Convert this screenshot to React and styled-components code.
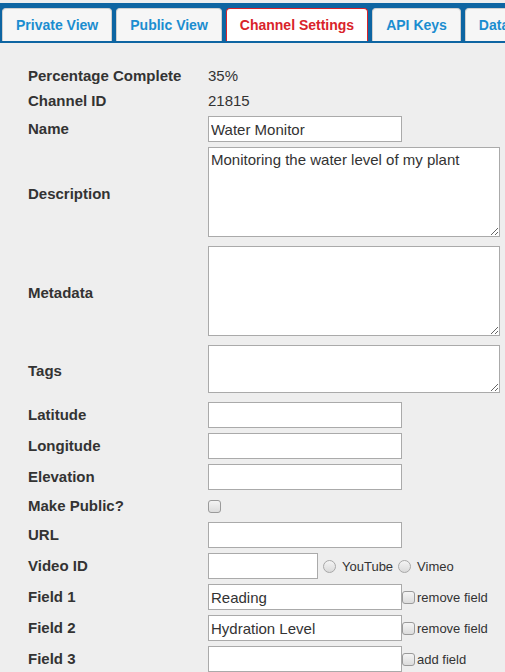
import React from "react";
import styled, { createGlobalStyle } from "styled-components";

const GlobalStyle = createGlobalStyle`
  html, body {
    margin: 0;
    padding: 0;
    background: #eeeeee;
    font-family: "Liberation Sans", Arial, sans-serif;
    color: #333;
    overflow: hidden;
  }
`;

const TabBar = styled.div`
  display: flex;
  gap: 4px;
  margin-top: 3px;
  padding: 5px 0 2px 2px;
  background: #0e65a2;
  overflow: hidden;
  white-space: nowrap;
`;

const Tab = styled.div`
  flex: none;
  height: 32px;
  line-height: 33px;
  padding: 0 13px;
  border: 1px solid ${(p) => (p.$active ? "#d9232a" : "#cfcfcf")};
  border-bottom: none;
  border-radius: 4px 4px 0 0;
  background: ${(p) => (p.$active ? "#ffffff" : "#f6f6f6")};
  color: ${(p) => (p.$active ? "#d9232a" : "#1b8dd0")};
  font-weight: bold;
  font-size: 14px;
`;

const Form = styled.div`
  display: grid;
  grid-template-columns: 180px auto;
  row-gap: 5px;
  align-items: center;
  margin: 23px 0 0 28px;
`;

const Label = styled.div`
  font-weight: bold;
  font-size: 15px;
  line-height: 20px;
  color: #333;
`;

const Value = styled.div`
  font-size: 15px;
  line-height: 20px;
  color: #333;
`;

const Cell = styled.div`
  display: flex;
  align-items: center;
  min-height: ${(p) => p.$h || 20}px;
  font-size: 13px;
  color: #333;
`;

const TextInput = styled.input`
  box-sizing: border-box;
  width: ${(p) => p.$w || 194}px;
  height: 26px;
  margin: 0;
  padding: 0 2px;
  border: 1px solid #aaaaaa;
  border-radius: 0;
  background: #fff;
  font-family: "Liberation Sans", Arial, sans-serif;
  font-size: 15px;
  color: #333;
  outline: none;
`;

const TextArea = styled.textarea`
  display: block;
  box-sizing: border-box;
  width: 292px;
  height: ${(p) => p.$h}px;
  margin: 0 0 4px 0;
  padding: 3px 2px;
  border: 1px solid #aaaaaa;
  border-radius: 0;
  background: #fff;
  font-family: "Liberation Sans", Arial, sans-serif;
  font-size: 15px;
  color: #333;
  outline: none;
`;

const Check = styled.input.attrs({ type: "checkbox" })`
  appearance: none;
  box-sizing: border-box;
  width: 13px;
  height: 13px;
  margin: 0 2px 0 0;
  border: 1px solid #9a9a9a;
  border-radius: 3px;
  background: linear-gradient(#f4f4f4, #dcdcdc);
`;

const Radio = styled.input.attrs({ type: "radio" })`
  appearance: none;
  box-sizing: border-box;
  width: 13px;
  height: 13px;
  margin: 0 3px 0 5px;
  border: 1px solid #a8a8a8;
  border-radius: 50%;
  background: linear-gradient(#f4f4f4, #dadada);
`;

const Opt = styled.span`
  margin-left: 3px;
  font-size: 13px;
`;

const fields = [
  { label: "Field 1", value: "Reading", action: "remove field" },
  { label: "Field 2", value: "Hydration Level", action: "remove field" },
  { label: "Field 3", value: "", action: "add field" },
];

export default function App() {
  return (
    <>
      <GlobalStyle />
      <TabBar>
        <Tab>Private View</Tab>
        <Tab>Public View</Tab>
        <Tab $active>Channel Settings</Tab>
        <Tab>API Keys</Tab>
        <Tab>Data</Tab>
      </TabBar>
      <Form>
        <Label>Percentage Complete</Label>
        <Value>35%</Value>

        <Label>Channel ID</Label>
        <Value>21815</Value>

        <Label>Name</Label>
        <Cell>
          <TextInput defaultValue="Water Monitor" />
        </Cell>

        <Label>Description</Label>
        <Cell>
          <TextArea $h={90} defaultValue="Monitoring the water level of my plant" />
        </Cell>

        <Label>Metadata</Label>
        <Cell>
          <TextArea $h={90} />
        </Cell>

        <Label>Tags</Label>
        <Cell>
          <TextArea $h={48} />
        </Cell>

        <Label>Latitude</Label>
        <Cell>
          <TextInput />
        </Cell>

        <Label>Longitude</Label>
        <Cell>
          <TextInput />
        </Cell>

        <Label>Elevation</Label>
        <Cell>
          <TextInput />
        </Cell>

        <Label>Make Public?</Label>
        <Cell $h={22}>
          <Check />
        </Cell>

        <Label>URL</Label>
        <Cell>
          <TextInput />
        </Cell>

        <Label>Video ID</Label>
        <Cell>
          <TextInput $w={110} />
          <Radio name="video" />
          <Opt>YouTube</Opt>
          <Radio name="video" />
          <Opt>Vimeo</Opt>
        </Cell>

        {fields.map((f) => (
          <React.Fragment key={f.label}>
            <Label>{f.label}</Label>
            <Cell>
              <TextInput defaultValue={f.value} />
              <Check />
              <span>{f.action}</span>
            </Cell>
          </React.Fragment>
        ))}
      </Form>
    </>
  );
}
